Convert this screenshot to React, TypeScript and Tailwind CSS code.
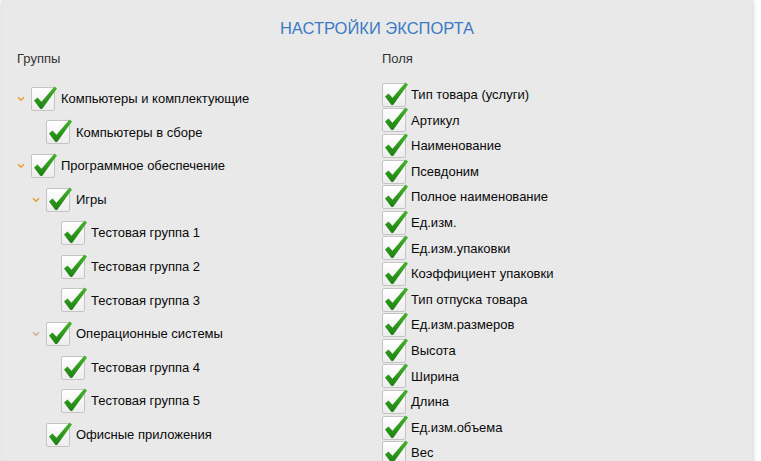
import * as React from "react";

type Node = { label: string; level: number; open?: boolean; muted?: boolean };

const groups: Node[] = [
  { label: "Компьютеры и комплектующие", level: 0, open: true },
  { label: "Компьютеры в сборе", level: 1 },
  { label: "Программное обеспечение", level: 0, open: true },
  { label: "Игры", level: 1, open: true },
  { label: "Тестовая группа 1", level: 2 },
  { label: "Тестовая группа 2", level: 2 },
  { label: "Тестовая группа 3", level: 2 },
  { label: "Операционные системы", level: 1, open: true, muted: true },
  { label: "Тестовая группа 4", level: 2 },
  { label: "Тестовая группа 5", level: 2 },
  { label: "Офисные приложения", level: 1 },
];

const fields = [
  "Тип товара (услуги)",
  "Артикул",
  "Наименование",
  "Псевдоним",
  "Полное наименование",
  "Ед.изм.",
  "Ед.изм.упаковки",
  "Коэффициент упаковки",
  "Тип отпуска товара",
  "Ед.изм.размеров",
  "Высота",
  "Ширина",
  "Длина",
  "Ед.изм.объема",
  "Вес",
];

function CheckBox() {
  return (
    <span className="relative block w-[24px] h-[24px] shrink-0 rounded-[2px] border border-[#c4c4c4] bg-gradient-to-b from-white to-[#ededed]">
      <svg className="absolute left-[-1px] top-[-3px]" width="27" height="27" viewBox="0 0 27 27">
        <defs>
          <linearGradient id="chk" x1="0" y1="0" x2="0" y2="1">
            <stop offset="0" stopColor="#46b52c" />
            <stop offset="1" stopColor="#1c8013" />
          </linearGradient>
        </defs>
        <path d="M3 15.5 L6.5 12.5 L10.5 16.8 L23.5 1.5 L26 3.5 L11.5 23.5 Q10.2 24.6 9 23.5 Z" fill="url(#chk)" />
      </svg>
    </span>
  );
}

function Chevron({ muted }: { muted?: boolean }) {
  return (
    <svg width="8" height="6" viewBox="0 0 8 6">
      <path d="M1 1.2 L4 4.2 L7 1.2" fill="none" stroke={muted ? "#c9b08a" : "#e3a12f"} strokeWidth="1.6" />
    </svg>
  );
}

export default function App() {
  return (
    <div className="w-[761px] h-[461px] overflow-hidden bg-white" style={{ fontFamily: '"Liberation Sans", Arial, sans-serif' }}>
      <div className="ml-[2px] w-[750px] h-[480px] bg-[#e9e9e9] shadow-[0_0_6px_rgba(0,0,0,0.25)] pt-[18px]">
        <h1 className="text-center text-[16.5px] leading-[20px] text-[#3b7bc4]">НАСТРОЙКИ ЭКСПОРТА</h1>
        <div className="flex mt-[13px]">
          <div className="w-[380px] pl-[15px]">
            <div className="text-[13px] leading-[15px] text-[#333]">Группы</div>
            <div className="mt-[16px]">
              {groups.map((g) => (
                <div key={g.label} className="flex items-center h-[33.6px]" style={{ paddingLeft: g.level * 15 }}>
                  <span className="w-[14px] flex justify-start">{g.open && <Chevron muted={g.muted} />}</span>
                  <CheckBox />
                  <span className="ml-[6px] text-[13px] text-[#0a0a0a]">{g.label}</span>
                </div>
              ))}
            </div>
          </div>
          <div>
            <div className="text-[13px] leading-[15px] text-[#333]">Поля</div>
            <div className="mt-[16px]">
              {fields.map((f) => (
                <div key={f} className="flex items-center h-[25.6px]">
                  <CheckBox />
                  <span className="ml-[5px] text-[13px] text-[#0a0a0a]">{f}</span>
                </div>
              ))}
            </div>
          </div>
        </div>
      </div>
    </div>
  );
}
